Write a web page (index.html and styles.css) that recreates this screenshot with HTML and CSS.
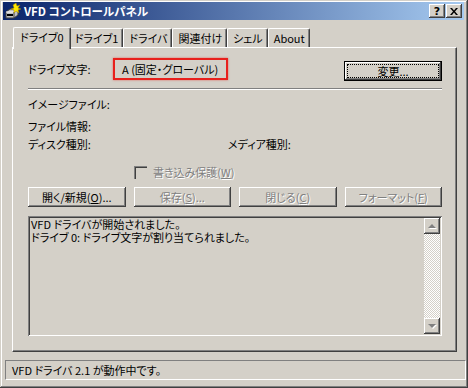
FILE: index.html
```html
<!DOCTYPE html>
<html lang="ja">
<head>
    <meta charset="UTF-8">
    <title>VFD コントロールパネル</title>
    <link rel="stylesheet" href="styles.css">
</head>
<body>

<div class="window">
    <div class="titlebar">
        <svg class="app-icon" width="16" height="16" viewBox="0 0 16 16">
            <path d="M1 9 L5 6 L13 6 L13 12 L9 15 L1 15 Z" fill="#c0c0c0" stroke="#404040" stroke-width="1"/>
            <path d="M1 9 L9 9 L13 6" fill="none" stroke="#ffffff" stroke-width="1"/>
            <path d="M9 9 L9 15" stroke="#404040" stroke-width="1"/>
            <rect x="2" y="11" width="6" height="2" fill="#000"/>
            <path d="M11 0 L12 3 L15 2 L13 5 L16 6 L13 7 L14 10 L11 8 L9 10 L9 7 L6 6 L9 5 L8 2 Z" fill="#ffe800" stroke="#a08000" stroke-width="0.5"/>
        </svg>
        <span class="title">VFD コントロールパネル</span>
        <div class="caption-buttons">
            <span class="cap-btn help">?</span>
            <span class="cap-btn close">
                <svg width="8" height="7" viewBox="0 0 8 7"><path d="M0 0h2l2 2.5 2-2.5h2L5 3.5 8 7H6L4 4.5 2 7H0l3-3.5z" fill="#000"/></svg>
            </span>
        </div>
    </div>

    <div class="client">
        <div class="tabs">
            <div class="tab active">ドライブ0</div>
            <div class="tab">ドライブ1</div>
            <div class="tab">ドライバ</div>
            <div class="tab">関連付け</div>
            <div class="tab">シェル</div>
            <div class="tab">About</div>
        </div>

        <div class="panel">
            <div class="drive-row">
                <span class="label">ドライブ文字:</span>
                <span class="drive-letter">A (固定・グローバル)</span>
                <button class="btn default"><span class="focus">変更...</span></button>
            </div>
            <div class="separator"></div>

            <div class="label image-file">イメージファイル:</div>
            <div class="label file-info">ファイル情報:</div>
            <div class="type-row">
                <span class="label">ディスク種別:</span>
                <span class="label">メディア種別:</span>
            </div>

            <div class="check disabled">
                <span class="box"></span>
                <span>書き込み保護(<u>W</u>)</span>
            </div>

            <div class="buttons">
                <button class="btn">開く/新規(<u>O</u>)...</button>
                <button class="btn" disabled>保存(<u>S</u>)...</button>
                <button class="btn" disabled>閉じる(<u>C</u>)</button>
                <button class="btn" disabled>フォーマット(<u>F</u>)</button>
            </div>

            <div class="log">
                <div class="log-text">
                    <div>VFD ドライバが開始されました。</div>
                    <div>ドライブ 0: ドライブ文字が割り当てられました。</div>
                </div>
                <div class="scrollbar">
                    <div class="scroll-btn up"><span class="arrow"></span></div>
                    <div class="track"></div>
                    <div class="scroll-btn down"><span class="arrow"></span></div>
                </div>
            </div>
        </div>
    </div>

    <div class="statusbar">VFD ドライバ 2.1 が動作中です。</div>
</div>

</body>
</html>
```

FILE: styles.css
```css
body {
    margin: 0;
    background: #d4d0c8;
    font-family: "Noto Sans CJK JP", "Noto Sans", sans-serif;
    font-size: 11px;
    font-feature-settings: "palt";
    color: #000;
}
.window {
    width: 468px;
    height: 388px;
    box-sizing: border-box;
    padding: 2px 4px 0 3px;
    background: #d4d0c8;
    box-shadow: inset -1px -1px #404040, inset 1px 1px #d4d0c8,
                inset -2px -2px #808080, inset 2px 2px #ffffff;
}

/* title bar */
.titlebar {
    height: 18px;
    display: flex;
    align-items: center;
    background: linear-gradient(to right, #0a246a, #a6caf0);
    color: #fff;
}
.app-icon {
    margin-left: 2px;
    margin-right: 3px;
}
.title {
    font-weight: bold;
    font-size: 11.5px;
    line-height: 18px;
}
.caption-buttons {
    margin-left: auto;
    margin-right: 2px;
    display: flex;
    gap: 1px;
}
.cap-btn {
    width: 16px;
    height: 14px;
    box-sizing: border-box;
    background: #d4d0c8;
    color: #000;
    display: flex;
    align-items: center;
    justify-content: center;
    font-family: "DejaVu Sans", sans-serif;
    font-weight: bold;
    font-size: 11px;
    box-shadow: inset -1px -1px #404040, inset 1px 1px #ffffff,
                inset -2px -2px #808080;
}

/* tabs */
.client {
    padding: 0 7px 0 9px;
}
.tabs {
    display: flex;
    align-items: flex-end;
    height: 29px;
    padding-left: 3px;
    position: relative;
    z-index: 1;
}
.tab {
    height: 18px;
    padding: 0 4px 0 5px;
    line-height: 18px;
    white-space: nowrap;
    border: 1px solid #ffffff;
    border-bottom: none;
    border-right-color: #404040;
    border-radius: 2px 2px 0 0;
    box-shadow: inset -1px 0 #808080;
    margin-bottom: 2px;
}
.tab.active {
    height: 21px;
    margin: 0 -2px 0 -2px;
    padding: 0 6px;
    line-height: 19px;
    margin-bottom: 0;
    background: #d4d0c8;
    position: relative;
    z-index: 2;
}
.panel {
    height: 305px;
    box-sizing: border-box;
    margin-top: -2px;
    padding: 10px 14px 0 15px;
    border: 1px solid #ffffff;
    border-right-color: #404040;
    border-bottom-color: #404040;
    box-shadow: inset -1px -1px #808080;
}

/* drive letter row */
.drive-row {
    display: flex;
    align-items: flex-start;
    height: 23px;
}
.drive-row .label {
    width: 85px;
    line-height: 22px;
}
.drive-letter {
    width: 115px;
    height: 22px;
    box-sizing: border-box;
    padding-left: 7px;
    line-height: 18px;
    white-space: nowrap;
    border: 2px solid #e8201c;
    box-shadow: 0 0 2px rgba(232, 32, 28, 0.6);
}
.separator {
    margin-top: 7px;
    height: 1px;
    border-bottom: 1px solid #ffffff;
    background: #808080;
}
.label {
    line-height: 14px;
}
.image-file {
    margin-top: 7px;
}
.file-info {
    margin-top: 8px;
}
.type-row {
    display: flex;
    margin-top: 4px;
}
.type-row .label:first-child {
    width: 200px;
}

/* checkbox */
.check {
    display: flex;
    align-items: center;
    margin: 14px 0 0 106px;
    height: 14px;
}
.check.disabled {
    color: #808080;
    text-shadow: 1px 1px #ffffff;
}
.check .box {
    width: 13px;
    height: 13px;
    box-sizing: border-box;
    margin-right: 6px;
    border-top: 1px solid #808080;
    border-left: 1px solid #808080;
    box-shadow: inset 1px 1px #404040;
}

/* buttons */
.btn {
    height: 20px;
    padding: 0;
    font: inherit;
    color: #000;
    white-space: nowrap;
    background: #d4d0c8;
    border: none;
    box-shadow: inset -1px -1px #404040, inset 1px 1px #ffffff,
                inset -2px -2px #808080;
}
.btn:disabled {
    color: #808080;
    text-shadow: 1px 1px #ffffff;
}
.btn.default {
    margin-left: auto;
    margin-top: 3px;
    width: 98px;
    padding: 3px;
    border: 1px solid #000;
    box-shadow: inset -1px -1px #404040, inset 1px 1px #ffffff,
                inset -2px -2px #808080;
}
.btn.default .focus {
    display: block;
    height: 12px;
    line-height: 12px;
    outline: 1px dotted #000;
}
.buttons {
    display: flex;
    gap: 8px;
    margin-top: 8px;
}
.buttons .btn {
    width: 98px;
}

/* log box */
.log {
    display: flex;
    height: 120px;
    margin-top: 9px;
    box-sizing: border-box;
    padding: 2px;
    box-shadow: inset 1px 1px #808080, inset -1px -1px #ffffff,
                inset 2px 2px #404040, inset -2px -2px #d4d0c8;
}
.log-text {
    flex: 1;
    padding-left: 1px;
    line-height: 13px;
}
.scrollbar {
    width: 16px;
    display: flex;
    flex-direction: column;
}
.scroll-btn {
    height: 16px;
    background: #d4d0c8;
    display: flex;
    align-items: center;
    justify-content: center;
    box-shadow: inset -1px -1px #404040, inset 1px 1px #ffffff,
                inset -2px -2px #808080;
}
.arrow {
    width: 0;
    height: 0;
    border-left: 4px solid transparent;
    border-right: 4px solid transparent;
    filter: drop-shadow(1px 1px #ffffff);
}
.up .arrow {
    border-bottom: 4px solid #808080;
}
.down .arrow {
    border-top: 4px solid #808080;
}
.track {
    flex: 1;
    background-image: conic-gradient(#ffffff 25%, #d4d0c8 0 50%, #ffffff 0 75%, #d4d0c8 0);
    background-size: 2px 2px;
}

/* status bar */
.statusbar {
    margin: 8px -2px 0 2px;
    height: 20px;
    box-sizing: border-box;
    padding-left: 6px;
    line-height: 19px;
    border: 1px solid #808080;
    border-right-color: #ffffff;
    border-bottom-color: #ffffff;
}
```
